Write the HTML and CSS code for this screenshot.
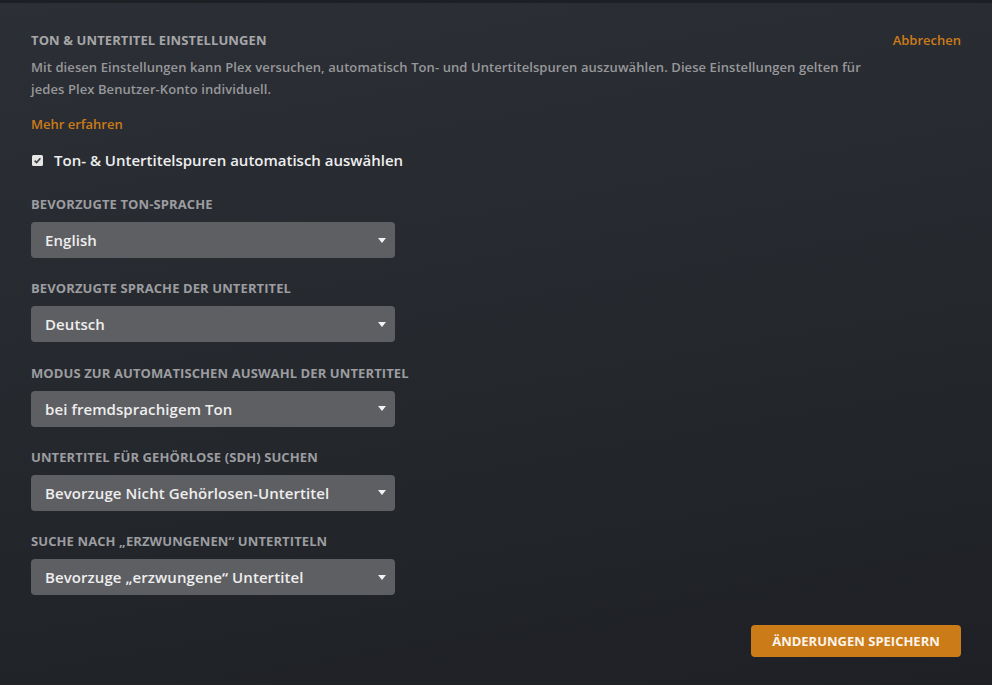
FILE: index.html
```html
<!DOCTYPE html>
<html lang="de">
<head>
<meta charset="utf-8">
<title>Ton &amp; Untertitel Einstellungen</title>
<link rel="stylesheet" href="styles.css">
</head>
<body>
<div class="page">
  <div class="header">
    <h2 class="title">Ton &amp; Untertitel Einstellungen</h2>
    <a class="cancel" href="#">Abbrechen</a>
  </div>
  <p class="desc">Mit diesen Einstellungen kann Plex versuchen, automatisch Ton- und Untertitelspuren auszuwählen. Diese Einstellungen gelten für jedes Plex Benutzer-Konto individuell.</p>
  <a class="more" href="#">Mehr erfahren</a>
  <label class="check">
    <svg class="box" width="11" height="11" viewBox="0 0 11 11"><rect x="0" y="0" width="11" height="11" rx="1.5" fill="#e6e6e6"/><path d="M2.6 5.6 L4.6 7.6 L8.4 3.2" fill="none" stroke="#3a3c40" stroke-width="1.5"/></svg>
    <span>Ton- &amp; Untertitelspuren automatisch auswählen</span>
  </label>
  <div class="groups">
    <div class="group">
      <div class="label">Bevorzugte Ton-Sprache</div>
      <div class="select"><span>English</span><i class="arrow"></i></div>
    </div>
    <div class="group">
      <div class="label">Bevorzugte Sprache der Untertitel</div>
      <div class="select"><span>Deutsch</span><i class="arrow"></i></div>
    </div>
    <div class="group">
      <div class="label">Modus zur automatischen Auswahl der Untertitel</div>
      <div class="select"><span>bei fremdsprachigem Ton</span><i class="arrow"></i></div>
    </div>
    <div class="group">
      <div class="label">Untertitel für Gehörlose (SDH) suchen</div>
      <div class="select"><span>Bevorzuge Nicht Gehörlosen-Untertitel</span><i class="arrow"></i></div>
    </div>
    <div class="group">
      <div class="label">Suche nach „erzwungenen“ Untertiteln</div>
      <div class="select"><span>Bevorzuge „erzwungene“ Untertitel</span><i class="arrow"></i></div>
    </div>
  </div>
  <div class="footer">
    <button class="save">Änderungen speichern</button>
  </div>
</div>
</body>
</html>
```

FILE: styles.css
```css
html, body {
  margin: 0;
  height: 100%;
}
body {
  font-family: "Open Sans", "Liberation Sans", sans-serif;
  font-weight: 600;
  background: linear-gradient(170deg, #2c2f35 0%, #25282d 50%, #1e2025 100%);
  border-top: 3px solid #1d1f25;
  box-sizing: border-box;
  overflow: hidden;
}
.page {
  padding: 27px 31px 0 31px;
}
.header {
  display: flex;
  justify-content: space-between;
  align-items: center;
}
.title {
  margin: 0;
  font-size: 13px;
  line-height: 20px;
  font-weight: 700;
  letter-spacing: 0.1px;
  text-transform: uppercase;
  color: #a6a7a9;
}
.cancel {
  font-size: 13px;
  line-height: 20px;
  font-weight: 600;
  color: #cc7b19;
  text-decoration: none;
}
.desc {
  margin: 6px 0 0 0;
  max-width: 840px;
  font-size: 13px;
  line-height: 22px;
  letter-spacing: 0.08px;
  color: #97989b;
}
.more {
  display: block;
  margin-top: 14px;
  font-size: 13px;
  line-height: 20px;
  font-weight: 600;
  color: #cc7b19;
  text-decoration: none;
}
.check {
  display: flex;
  align-items: center;
  gap: 11px;
  margin-top: 15px;
  font-size: 15px;
  line-height: 22px;
  color: #eeeeee;
}
.box {
  flex: none;
  margin-left: 1px;
}
.groups {
  display: flex;
  flex-direction: column;
  gap: 21.3px;
  margin-top: 24px;
}
.group {
  display: flex;
  flex-direction: column;
  gap: 9px;
}
.label {
  font-size: 13px;
  line-height: 18px;
  font-weight: 700;
  letter-spacing: 0.1px;
  text-transform: uppercase;
  color: #9c9da0;
}
.select {
  width: 364px;
  height: 36px;
  box-sizing: border-box;
  padding: 0 9px 0 14px;
  display: flex;
  align-items: center;
  justify-content: space-between;
  background: #5e5f63;
  border-radius: 4px;
  font-size: 15px;
  letter-spacing: 0.08px;
  color: #eeeeee;
}
.arrow {
  width: 0;
  height: 0;
  border-left: 4px solid transparent;
  border-right: 4px solid transparent;
  border-top: 5px solid #f2f2f2;
}
.footer {
  display: flex;
  justify-content: flex-end;
  margin-top: 30px;
}
.save {
  width: 210px;
  height: 32px;
  border: none;
  border-radius: 4px;
  background: #cc7b19;
  color: #fbf4ea;
  font-family: "Open Sans", "Liberation Sans", sans-serif;
  font-size: 13px;
  font-weight: 700;
  text-transform: uppercase;
  padding: 0;
}
```
